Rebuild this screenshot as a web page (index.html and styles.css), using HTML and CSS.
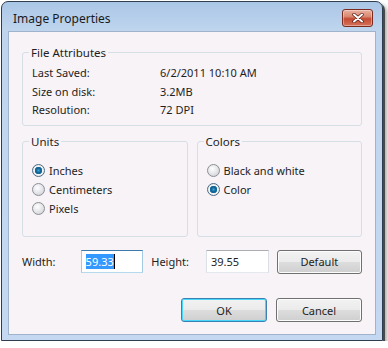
FILE: index.html
```html
<!DOCTYPE html>
<html lang="en">
<head>
  <meta charset="UTF-8" />
  <title>Image Properties</title>
  <link rel="stylesheet" href="styles.css">
</head>
<body>
  <div class="window">
    <div class="titlebar">
      <span class="title">Image Properties</span>
      <button class="close" title="Close">
        <svg width="14" height="10" viewBox="0 0 14 10">
          <path d="M3 1.5 L11 8.5 M11 1.5 L3 8.5" stroke="#5a1a12" stroke-width="3.4" stroke-linecap="round" />
          <path d="M3 1.5 L11 8.5 M11 1.5 L3 8.5" stroke="#ffffff" stroke-width="2" stroke-linecap="round" />
        </svg>
      </button>
    </div>

    <div class="client">
      <fieldset class="group attrs">
        <legend>File Attributes</legend>
        <div class="attr-row"><span class="attr-label">Last Saved:</span><span>6/2/2011 10:10 AM</span></div>
        <div class="attr-row"><span class="attr-label">Size on disk:</span><span>3.2MB</span></div>
        <div class="attr-row"><span class="attr-label">Resolution:</span><span>72 DPI</span></div>
      </fieldset>

      <div class="group-pair">
        <fieldset class="group options">
          <legend>Units</legend>
          <label class="radio"><input type="radio" name="units" checked /> Inches</label>
          <label class="radio"><input type="radio" name="units" /> Centimeters</label>
          <label class="radio"><input type="radio" name="units" /> Pixels</label>
        </fieldset>
        <fieldset class="group options">
          <legend>Colors</legend>
          <label class="radio"><input type="radio" name="colors" /> Black and white</label>
          <label class="radio"><input type="radio" name="colors" checked /> Color</label>
        </fieldset>
      </div>

      <div class="size-row">
        <span class="size-label">Width:</span>
        <div class="textbox focused"><span class="sel">59.33</span><span class="caret"></span></div>
        <span class="size-label height">Height:</span>
        <div class="textbox">39.55</div>
        <button class="btn">Default</button>
      </div>

      <div class="actions">
        <button class="btn default">OK</button>
        <button class="btn">Cancel</button>
      </div>
    </div>
  </div>
</body>
</html>
```

FILE: styles.css
```css
body {
  margin: 0;
  background: #ffffff;
  font-family: 'Noto Sans', 'Open Sans', sans-serif;
  font-size: 11px;
  color: #1e1e1e;
}
.window {
  box-sizing: border-box;
  width: 382px;
  height: 340px;
  margin: 1px 0 0 1px;
  padding: 0 6px 7px 6px;
  border: 1px solid #2f3d4c;
  border-radius: 7px 7px 0 0;
  background: linear-gradient(#aac6e6, #bfd5ee 28px, #c4d9f1);
  box-shadow: 2px 2px 0 #4a4a4a, 4px 4px 4px rgba(0, 0, 0, 0.35);
}
.titlebar {
  height: 28px;
  display: flex;
  align-items: flex-start;
  justify-content: space-between;
}
.title {
  margin: 8px 0 0 5px;
  font-size: 12px;
  color: #1a1a1a;
}
.close {
  width: 31px;
  height: 18px;
  margin: 7px 3px 0 0;
  padding: 0;
  border: 1px solid #7b2b20;
  border-radius: 3px;
  background: linear-gradient(#eab0a0, #d98a73 40%, #c54b34 55%, #d57358);
  box-shadow: inset 0 0 0 1px rgba(255, 255, 255, 0.35);
  display: flex;
  align-items: center;
  justify-content: center;
}
.client {
  box-sizing: border-box;
  height: 304px;
  margin-top: 1px;
  padding: 13px 13px 0 13px;
  border: 1px solid #9fb4cc;
  background: #f7f3f7;
}
.group {
  margin: 0;
  border: 1px solid #d5dfe5;
  border-radius: 3px;
  padding: 0 9px;
  min-width: 0;
}
.group legend {
  padding: 0 2px;
  margin-left: -3px;
  font-size: 11.5px;
  line-height: 15px;
}
.attrs {
  height: 81px;
  box-sizing: border-box;
  padding-top: 4px;
}
.attr-row {
  display: flex;
  height: 18.5px;
  line-height: 18.5px;
}
.attr-label {
  width: 128px;
}
.group-pair {
  display: flex;
  gap: 9px;
  margin-top: 8px;
}
.options {
  flex: 1;
  box-sizing: border-box;
  height: 103px;
  padding-top: 12px;
}
.radio {
  display: flex;
  align-items: center;
  gap: 4px;
  height: 19px;
}
.radio input {
  appearance: none;
  width: 13px;
  height: 13px;
  margin: 0;
  border: 1px solid #8c8f94;
  border-radius: 50%;
  background: radial-gradient(circle at 40% 35%, #ffffff, #e2e3e6 55%, #c9cbcf);
}
.radio input:checked {
  background: radial-gradient(circle, #3aa6dc 0, #0d5d8e 2.5px, #1e6f9e 3.5px, #f4f5f7 4px, #d5d7da 100%);
  border-color: #4d6b84;
}
.size-row {
  display: flex;
  align-items: center;
  margin-top: 12px;
  height: 25px;
}
.size-label {
  width: 59px;
}
.size-label.height {
  width: 55px;
  margin-left: 8px;
}
.textbox {
  box-sizing: border-box;
  width: 63px;
  height: 23px;
  padding: 0 4px;
  display: flex;
  align-items: center;
  background: #ffffff;
  border: 1px solid #dbdfe6;
  border-top-color: #abadb3;
  border-bottom-color: #e3e9ef;
}
.textbox.focused {
  border-color: #a4c9e3;
  border-top-color: #3d7bad;
  border-bottom-color: #b7d9ed;
}
.sel {
  background: #3399ff;
  color: #ffffff;
  line-height: 15px;
}
.caret {
  width: 1px;
  height: 15px;
  background: #000000;
}
.btn {
  box-sizing: border-box;
  width: 86px;
  height: 24px;
  padding: 0;
  font-family: inherit;
  font-size: 11px;
  color: #1e1e1e;
  border: 1px solid #707070;
  border-radius: 3px;
  background: linear-gradient(#f2f2f2, #ebebeb 50%, #dddddd 50%, #cfcfcf);
  box-shadow: inset 0 0 0 1px #fcfcfc;
}
.size-row .btn {
  margin-left: 8px;
}
.btn.default {
  border-color: #3c7fb1;
  box-shadow: inset 0 0 0 1px #48d8fb;
}
.actions {
  display: flex;
  justify-content: flex-end;
  gap: 9px;
  margin-top: 24px;
}
```
